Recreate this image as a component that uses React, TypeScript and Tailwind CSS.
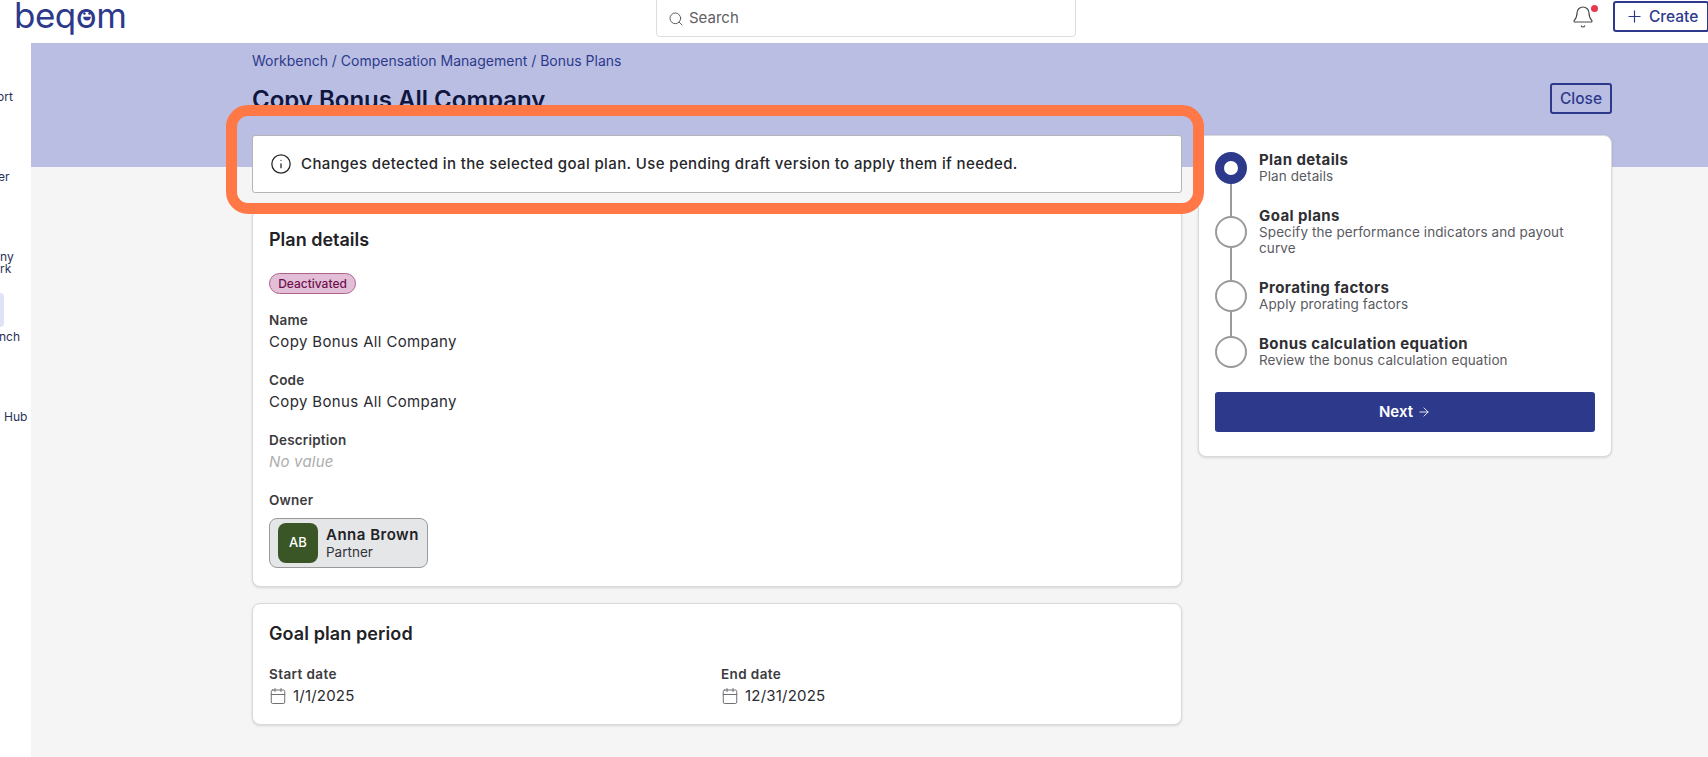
import { ArrowRight, Bell, Calendar, Info, Plus, Search } from "lucide-react";

const steps = [
  { title: "Plan details", sub: "Plan details", active: true },
  { title: "Goal plans", sub: "Specify the performance indicators and payout curve" },
  { title: "Prorating factors", sub: "Apply prorating factors" },
  { title: "Bonus calculation equation", sub: "Review the bonus calculation equation" },
];

function Field({ label, children }: { label: string; children: React.ReactNode }) {
  return (
    <div className="mt-4">
      <div className="text-[13.5px] leading-5 font-semibold tracking-[0.2px] text-[#3b3b40]">{label}</div>
      {children}
    </div>
  );
}

function Logo() {
  return (
    <span className="relative block text-[35px] leading-[30px] tracking-[-0.5px] text-[#2d3a8c]">
      beqom
      {/* smiley in the second o */}
      <svg viewBox="0 0 16 16" className="absolute left-[65px] top-[8px] h-4 w-4">
        <circle cx="5.4" cy="5.5" r="1.3" fill="#2d3a8c" />
        <circle cx="10.6" cy="5.5" r="1.3" fill="#2d3a8c" />
        <path d="M4.2 8.8h7.6a3.8 3.8 0 0 1-7.6 0z" fill="#2d3a8c" />
      </svg>
    </span>
  );
}

export default function App() {
  return (
    <div className="relative h-screen overflow-hidden bg-white font-['Inter',sans-serif]">
      {/* Top bar */}
      <header className="flex h-[43px] items-start">
        <div className="w-[656px] pl-[14px]">
          <Logo />
        </div>
        <div className="-mt-px flex h-[38px] w-[420px] items-center gap-[5px] rounded-b border border-[#dedede] pt-px pl-[11px] text-[15px] text-[#5f6064]">
          <Search size={16} strokeWidth={1.5} />
          Search
        </div>
        <div className="flex flex-1 justify-end">
          <div className="relative mt-[5px] mr-[18px]">
            <Bell size={24} strokeWidth={1.2} className="text-[#4a4a4f]" />
            <span className="absolute top-0 right-[-3px] h-[7px] w-[7px] rounded-full bg-[#e5384f]" />
          </div>
          <button className="-mr-px mt-px flex h-[31px] w-[96px] items-center gap-[5px] rounded-[3px] border-2 border-[#2d3a8c] pl-[10px] text-[15.5px] font-medium text-[#2d3a8c]">
            <Plus size={19} strokeWidth={1.5} />
            Create
          </button>
        </div>
      </header>

      <div className="flex h-[714px]">
        {/* Sidebar, cut off by the window edge */}
        <aside className="w-[31px] shrink-0 overflow-hidden text-[12px] leading-3 text-[#2a2f55]">
          <div className="mt-[48px] -ml-[3px]">ort</div>
          <div className="mt-[68px] -ml-[2px]">er</div>
          <div className="mt-[68px]">ny</div>
          <div>rk</div>
          <div className="mt-[18px] h-[34px] w-1 rounded-r bg-[#dfe3f5]" />
          <div className="mt-[4px] -ml-[1px]">nch</div>
          <div className="mt-[68px] pl-[4px]">Hub</div>
        </aside>

        <main className="flex-1 bg-[#f5f5f5]">
          {/* Lavender band */}
          <div className="flex h-[124px] justify-between bg-[#babee3] pl-[221px] pr-[96px]">
            <div>
              <div className="mt-[8px] text-[14px] leading-5 text-[#2d3a8c]">
                Workbench / Compensation Management / Bonus Plans
              </div>
              <h1 className="mt-[13px] text-[24px] leading-8 font-semibold text-[#0f1640]">
                Copy Bonus All Company
              </h1>
            </div>
            <button className="mt-[40px] h-[31px] w-[62px] rounded-[3px] border-2 border-[#2d3a8c] text-[15.5px] font-medium text-[#2d3a8c]">
              Close
            </button>
          </div>

          <div className="-mt-[32px] flex gap-4 pl-[221px]">
            <div className="flex w-[930px] flex-col gap-4">
              <div className="flex h-[58px] items-center gap-[9px] rounded-[3px] border border-[#b5b5b5] bg-white pl-[17px] text-[15px] font-medium tracking-[0.38px] text-[#26262b]">
                <Info size={22} strokeWidth={1.4} />
                Changes detected in the selected goal plan. Use pending draft version to apply them if needed.
              </div>

              <section className="rounded-lg border border-[#d9d9d9] bg-white px-4 pt-[18px] pb-[18px] shadow-sm">
                <h2 className="text-[18px] leading-6 font-semibold text-[#222226]">Plan details</h2>
                <span className="mt-[21px] flex h-[21px] w-[87px] items-center justify-center rounded-full border border-[#b0628f] bg-[#e2bfd6] text-[12px] font-medium text-[#6f0f50]">
                  Deactivated
                </span>
                <Field label="Name">
                  <div className="text-[15px] leading-6 tracking-[0.36px] text-[#2b2b30]">Copy Bonus All Company</div>
                </Field>
                <Field label="Code">
                  <div className="text-[15px] leading-6 tracking-[0.36px] text-[#2b2b30]">Copy Bonus All Company</div>
                </Field>
                <Field label="Description">
                  <div className="text-[15px] leading-6 tracking-[0.2px] text-[#adadad] italic">No value</div>
                </Field>
                <Field label="Owner">
                  <div className="mt-2 flex h-[50px] w-[159px] items-center gap-2 rounded-lg border border-[#9a9a9a] bg-[#e5e6e8] pl-2">
                    <div className="flex h-10 w-10 items-center justify-center rounded-lg bg-[#3a5526] text-[13px] font-medium text-white">
                      AB
                    </div>
                    <div>
                      <div className="text-[15px] leading-[18px] font-semibold tracking-[0.5px] text-[#222226]">Anna Brown</div>
                      <div className="text-[13.5px] leading-[17px] text-[#333338]">Partner</div>
                    </div>
                  </div>
                </Field>
              </section>

              <section className="rounded-lg border border-[#d9d9d9] bg-white px-4 pt-[18px] pb-4 shadow-sm">
                <h2 className="text-[18px] leading-6 font-semibold tracking-[0.1px] text-[#222226]">Goal plan period</h2>
                <div className="mt-[18px] grid grid-cols-[452px_1fr]">
                  {[
                    { label: "Start date", value: "1/1/2025" },
                    { label: "End date", value: "12/31/2025" },
                  ].map((d) => (
                    <div key={d.label}>
                      <div className="text-[13.5px] leading-5 font-semibold tracking-[0.4px] text-[#3b3b40]">{d.label}</div>
                      <div className="flex items-center gap-[6px] text-[15px] leading-6 tracking-[0.2px] text-[#2b2b30]">
                        <Calendar size={18} strokeWidth={1.3} className="text-[#6b6b70]" />
                        {d.value}
                      </div>
                    </div>
                  ))}
                </div>
              </section>
            </div>

            {/* Stepper */}
            <div className="h-[322px] w-[414px] rounded-lg border border-[#d9d9d9] bg-white px-4 pt-4 shadow-sm">
              <div className="relative flex flex-col gap-6">
                <div className="absolute top-4 bottom-4 left-[15px] w-0.5 bg-[#9a9a9a]" />
                {steps.map((s) => (
                  <div key={s.title} className="relative flex items-center gap-3">
                    <div
                      className={
                        s.active
                          ? "h-8 w-8 shrink-0 rounded-full border-[9px] border-[#2d3a8c] bg-white"
                          : "h-8 w-8 shrink-0 rounded-full border-2 border-[#9a9a9a] bg-white"
                      }
                    />
                    <div>
                      <div className="text-[15px] leading-4 font-bold tracking-[0.4px] text-[#2f2f34]">{s.title}</div>
                      <div className="w-[320px] text-[13.5px] leading-4 tracking-[0.1px] text-[#5a5a5f]">{s.sub}</div>
                    </div>
                  </div>
                ))}
              </div>
              <button className="mt-6 flex h-10 w-full items-center justify-center gap-1 rounded-[3px] bg-[#2d3a8c] text-[15px] font-semibold text-white">
                Next
                <ArrowRight size={14} strokeWidth={1.5} />
              </button>
            </div>
          </div>
        </main>
      </div>

      {/* Orange callout drawn over the screenshot */}
      <div className="pointer-events-none absolute top-[105px] left-[226px] h-[109px] w-[978px] rounded-[22px] border-[11px] border-[#ff7845]" />
    </div>
  );
}
